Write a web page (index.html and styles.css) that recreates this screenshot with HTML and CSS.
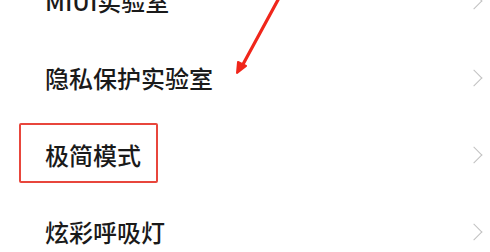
FILE: index.html
```html
<!DOCTYPE html>
<html lang="zh-CN">
<head>
  <meta charset="UTF-8">
  <title>更多设置</title>
  <link rel="stylesheet" href="styles.css">
</head>
<body>
  <div class="settings-list">
    <div class="item"><span class="label">MIUI实验室</span><span class="chevron"></span></div>
    <div class="item"><span class="label">隐私保护实验室</span><span class="chevron"></span></div>
    <div class="item"><span class="label">极简模式</span><span class="chevron"></span></div>
    <div class="item"><span class="label">炫彩呼吸灯</span><span class="chevron"></span></div>
  </div>

  <div class="highlight-box"></div>

  <svg class="arrow" width="60" height="80" viewBox="0 0 60 80">
    <line x1="54" y1="-2" x2="16" y2="68" stroke="#f0261b" stroke-width="3.2" stroke-linecap="round"/>
    <polygon points="12,73 13,62 21,66" fill="#f0261b" stroke="#f0261b" stroke-width="2" stroke-linejoin="round"/>
  </svg>
</body>
</html>
```

FILE: styles.css
```css
body {
  margin: 0;
  height: 252px;
  background: #fff;
  font-family: "Noto Sans CJK SC", "Noto Sans", sans-serif;
  color: #1a1a1a;
  overflow: hidden;
}
.settings-list {
  margin-top: -38px;
}
.item {
  height: 77px;
  display: flex;
  align-items: center;
  justify-content: space-between;
  padding: 0 6px 0 45px;
}
.label {
  font-size: 24px;
  font-weight: 500;
  line-height: 1;
}
.chevron {
  width: 11px;
  height: 11px;
  border-top: 1.6px solid #c2c2c2;
  border-right: 1.6px solid #c2c2c2;
  transform: rotate(45deg);
  margin-right: 4px;
}
.highlight-box {
  position: absolute;
  left: 19px;
  top: 123px;
  width: 135px;
  height: 56px;
  border: 2px solid #e8463c;
  border-radius: 2px;
}
.arrow {
  position: absolute;
  left: 225px;
  top: 0;
}
```
